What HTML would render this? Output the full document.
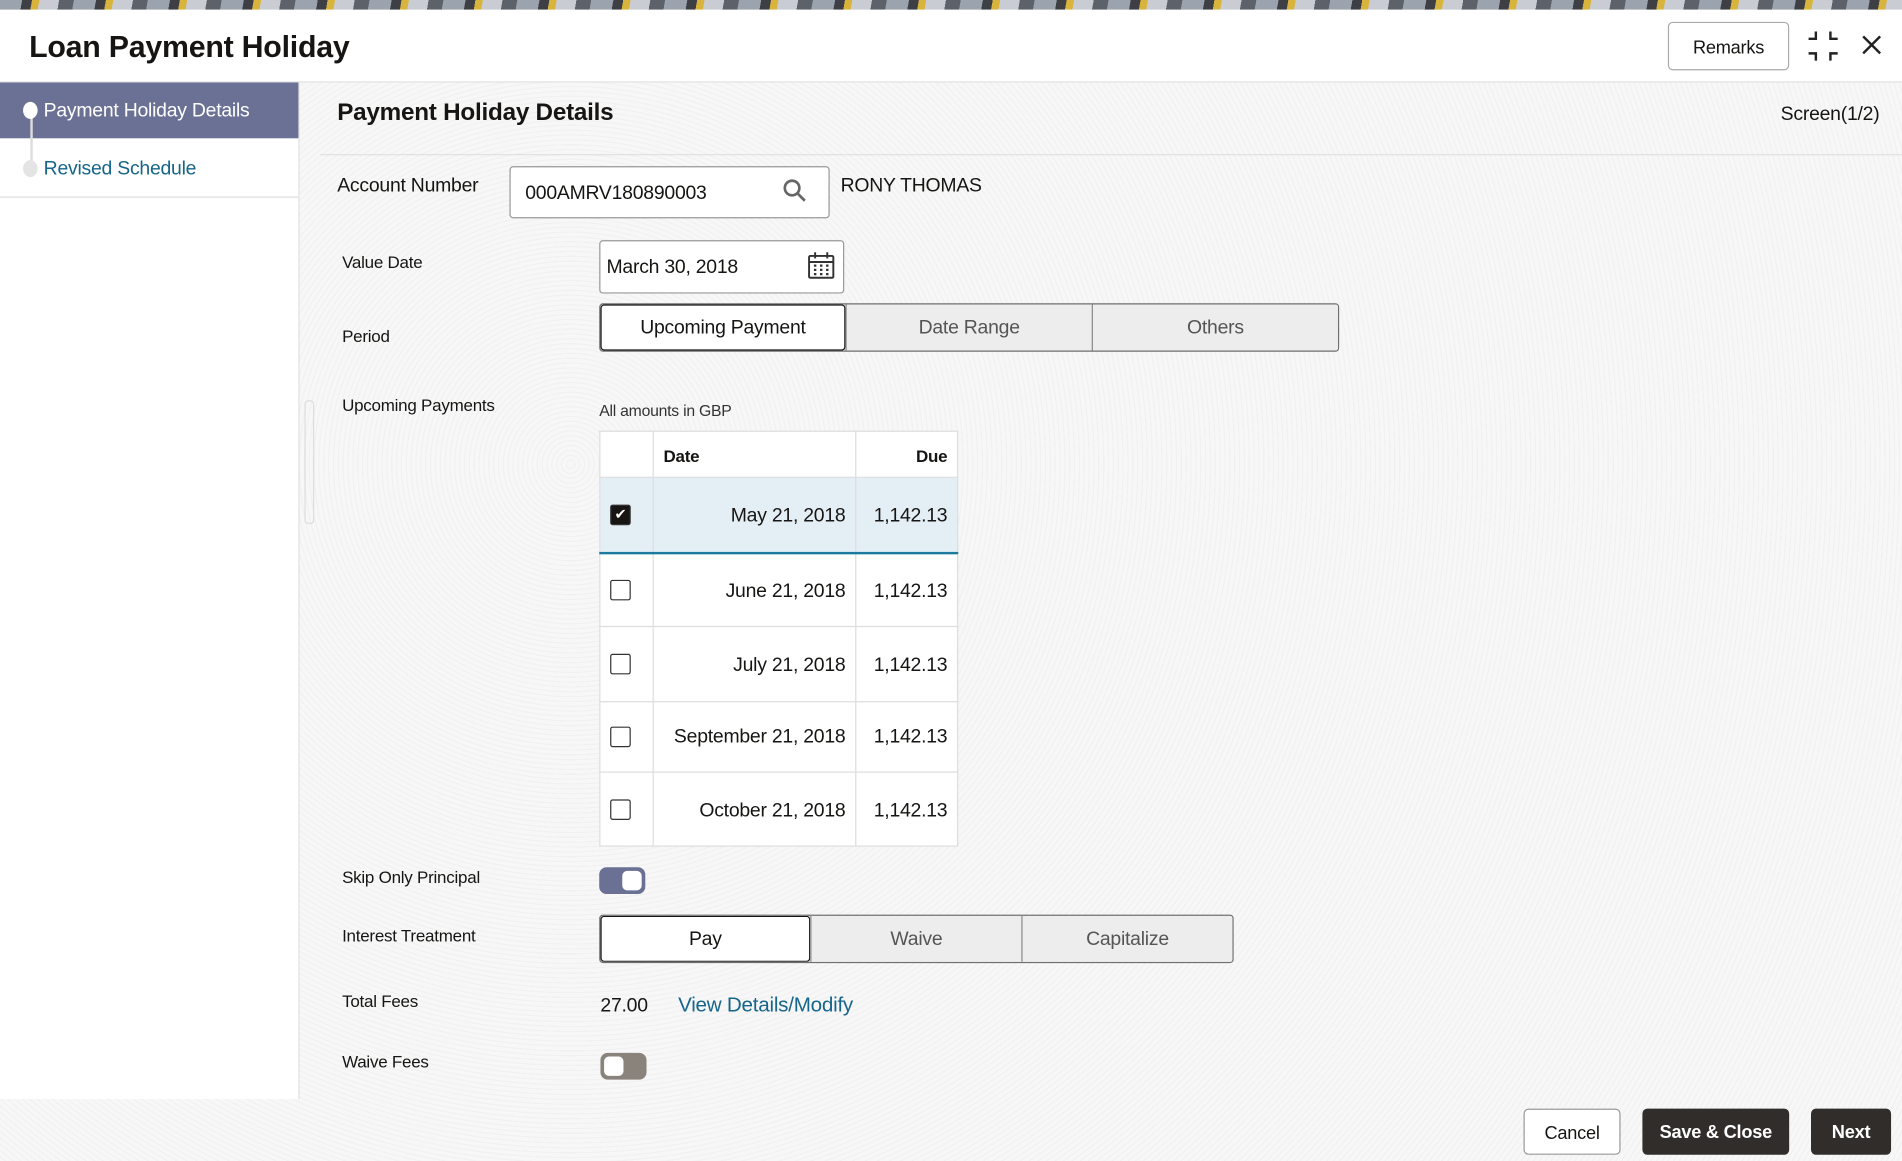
<!DOCTYPE html>
<html><head><meta charset="utf-8"><style>
html,body{margin:0;padding:0;width:1902px;height:1160px;overflow:hidden;background:#f6f6f6}
#w{position:absolute;left:0;top:0;width:1568px;height:957px;transform:scale(1.2130);transform-origin:0 0;font-family:"Liberation Sans",sans-serif;color:#161513;letter-spacing:-0.2px;
background:repeating-radial-gradient(circle at 30% 40%,#f7f7f7 0 3px,#f1f1f1 3px 4px)}
.a{position:absolute}
.lbl{font-size:14px;color:#161513}
.seg{position:absolute;display:flex;border:1px solid #6f6f6f;border-radius:3px;overflow:hidden;background:#efefef}
.seg div{flex:1;text-align:center;font-size:16px;color:#555;border-left:1px solid #8a8a8a;background:#ededed}
.seg div:first-child{border-left:none;background:#fff;color:#161513;box-shadow:inset 0 0 0 1px #161513;border-radius:3px}
table{border-collapse:collapse;background:#fff;font-size:16px}
td{border:1px solid #ddd;padding:0 8px}
.cb{width:17px;height:17px;border:1.5px solid #333;border-radius:2px;margin-left:0;box-sizing:border-box}
.btn{position:absolute;height:38px;border-radius:4px;font-size:15px;font-weight:bold;text-align:center;line-height:40px;box-sizing:border-box}
</style></head><body><div id="w">
<div class="a" style="left:0;top:0;width:1568px;height:8px;background:repeating-linear-gradient(100deg,#9aa3ae 0 18px,#3d3f44 18px 26px,#d9b43c 26px 32px,#c9cdd3 32px 48px,#5c616a 48px 60px)"></div>
<div class="a" style="left:0;top:8px;width:1568px;height:59px;background:#fff;border-bottom:1px solid #e2e2e2"></div>
<div class="a" style="left:24px;top:25px;font-size:25px;font-weight:bold">Loan Payment Holiday</div>
<div class="a" style="left:1375px;top:18px;width:98px;height:38px;border:1px solid #aaa;border-radius:4px;background:#fff;font-size:15px;text-align:center;line-height:41px">Remarks</div>
<svg class="a" style="left:1490px;top:25px" width="26" height="26" viewBox="0 0 26 26" fill="none" stroke="#222" stroke-width="2"><path d="M7 1v6H1M19 1v6h6M7 25v-6H1M19 25v-6h6"/></svg>
<svg class="a" style="left:1534px;top:28px" width="18" height="18" stroke="#222" stroke-width="2"><path d="M2 2l14 14M16 2L2 16"/></svg>
<div class="a" style="left:0;top:68px;width:246px;height:838px;background:#fff;border-right:1px solid #e0e0e0"></div>
<div class="a" style="left:0;top:68px;width:246px;height:46px;background:#6b7194"></div>
<div class="a" style="left:0;top:162px;width:246px;height:1px;background:#ddd"></div>
<div class="a" style="left:25px;top:91px;width:2px;height:48px;background:#ddd"></div>
<div class="a" style="left:19px;top:84px;width:12px;height:14px;border-radius:50%;background:#fff"></div>
<div class="a" style="left:19px;top:132px;width:12px;height:14px;border-radius:50%;background:#e4e4e4"></div>
<div class="a" style="left:36px;top:83px;font-size:16px;color:#fff">Payment Holiday Details</div>
<div class="a" style="left:36px;top:131px;font-size:16px;color:#16658a">Revised Schedule</div>
<div class="a" style="left:278px;top:82px;font-size:20px;font-weight:bold">Payment Holiday Details</div>
<div class="a" style="left:1468px;top:86px;font-size:16px">Screen(1/2)</div>
<div class="a" style="left:264px;top:127px;width:1304px;height:1px;background:#e0e0e0"></div>
<div class="a" style="left:278px;top:145px;font-size:16px">Account Number</div>
<div class="a" style="left:420px;top:137px;width:262px;height:41px;border:1px solid #999;border-radius:3px;background:#fff"></div>
<div class="a" style="left:433px;top:151px;font-size:16px">000AMRV180890003</div>
<svg class="a" style="left:645px;top:147px" width="20" height="20" fill="none" stroke="#666" stroke-width="2.2"><circle cx="8" cy="8" r="6"/><path d="M12.5 12.5l6 6"/></svg>
<div class="a" style="left:693px;top:145px;font-size:16px">RONY THOMAS</div>
<div class="a lbl" style="left:282px;top:208px">Value Date</div>
<div class="a" style="left:494px;top:198px;width:200px;height:42px;border:1px solid #999;border-radius:3px;background:#fff"></div>
<div class="a" style="left:500px;top:212px;font-size:16px">March 30, 2018</div>
<svg class="a" style="left:665px;top:207px" width="24" height="24" fill="none" stroke="#333" stroke-width="1.6"><rect x="2" y="4" width="20" height="18" rx="1"/><path d="M2 9h20M7 1v5M17 1v5"/><path d="M6 12h2M11 12h2M16 12h2M6 15.5h2M11 15.5h2M16 15.5h2M6 19h2M11 19h2M16 19h2" stroke-width="1.8"/></svg>
<div class="a lbl" style="left:282px;top:269px">Period</div>
<div class="seg" style="left:494px;top:250px;width:608px;height:38px;line-height:40px"><div>Upcoming Payment</div><div>Date Range</div><div>Others</div></div>
<div class="a lbl" style="left:282px;top:326px">Upcoming Payments</div>
<div class="a" style="left:251px;top:330px;width:6px;height:100px;border:1px solid #ddd;border-radius:3px"></div>
<div class="a" style="left:494px;top:331px;font-size:13px;color:#333">All amounts in GBP</div>
<table class="a" style="left:494px;top:355px;width:296px">
<tr style="height:38px;font-size:14px;font-weight:bold"><td style="width:27px"></td><td style="padding-top:3px">Date</td><td style="text-align:right;width:67px;padding-top:3px">Due</td></tr>
<tr style="height:62px;background:#e4eff5;border-bottom:2px solid #1c7a9e"><td><div class="cb" style="background:#161513;color:#fff;font-size:12px;text-align:center;line-height:15px">✔</div></td><td style="text-align:right;padding-top:3px">May 21, 2018</td><td style="text-align:right;padding-top:3px">1,142.13</td></tr>
<tr style="height:61px"><td><div class="cb"></div></td><td style="text-align:right;padding-top:3px">June 21, 2018</td><td style="text-align:right;padding-top:3px">1,142.13</td></tr>
<tr style="height:62px"><td><div class="cb"></div></td><td style="text-align:right;padding-top:3px">July 21, 2018</td><td style="text-align:right;padding-top:3px">1,142.13</td></tr>
<tr style="height:58px"><td><div class="cb"></div></td><td style="text-align:right">September 21, 2018</td><td style="text-align:right">1,142.13</td></tr>
<tr style="height:61px"><td><div class="cb"></div></td><td style="text-align:right;padding-top:3px">October 21, 2018</td><td style="text-align:right;padding-top:3px">1,142.13</td></tr>
</table>
<div class="a lbl" style="left:282px;top:715px">Skip Only Principal</div>
<div class="a" style="left:494px;top:715px;width:38px;height:22px;border-radius:6px;background:#6b7194"></div>
<div class="a" style="left:513px;top:718px;width:16px;height:16px;border-radius:4px;background:#fff"></div>
<div class="a lbl" style="left:282px;top:763px">Interest Treatment</div>
<div class="seg" style="left:494px;top:754px;width:521px;height:38px;line-height:40px"><div>Pay</div><div>Waive</div><div>Capitalize</div></div>
<div class="a lbl" style="left:282px;top:817px">Total Fees</div>
<div class="a" style="left:495px;top:821px;font-size:16px">27.00</div>
<div class="a" style="left:559px;top:819px;font-size:17px;color:#16658a">View Details/Modify</div>
<div class="a lbl" style="left:282px;top:867px">Waive Fees</div>
<div class="a" style="left:495px;top:868px;width:38px;height:22px;border-radius:6px;background:#8a837c"></div>
<div class="a" style="left:498px;top:871px;width:16px;height:16px;border-radius:4px;background:#fff"></div>
<div class="btn" style="left:1256px;top:914px;width:80px;border:1px solid #999;background:#fff;font-weight:normal">Cancel</div>
<div class="btn" style="left:1354px;top:914px;width:121px;background:#312d2a;color:#fff">Save &amp; Close</div>
<div class="btn" style="left:1493px;top:914px;width:66px;background:#312d2a;color:#fff">Next</div>
</div></body></html>
